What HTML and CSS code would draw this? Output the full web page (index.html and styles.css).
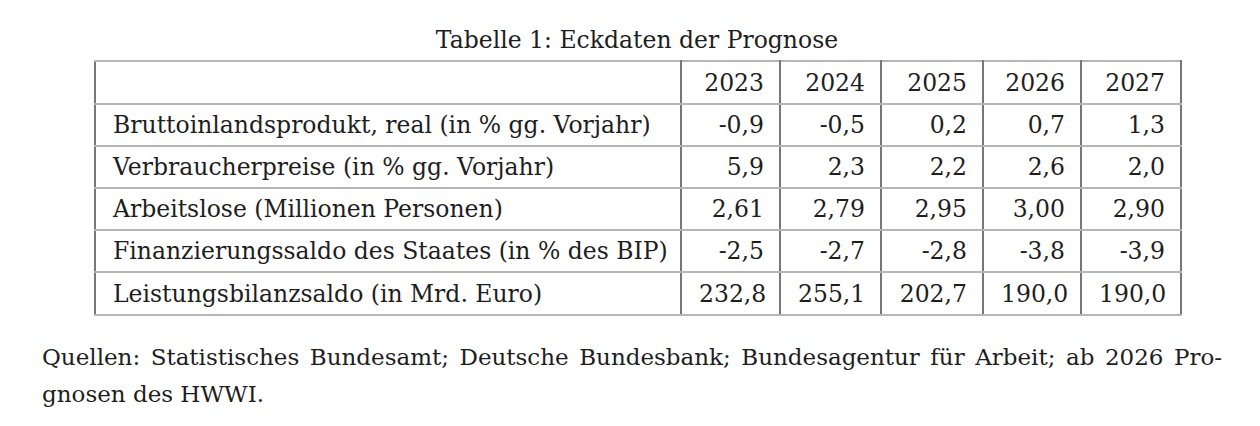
FILE: index.html
```html
<!DOCTYPE html>
<html lang="de">
<head>
<meta charset="utf-8">
<title>Tabelle 1</title>
<link rel="stylesheet" href="styles.css">
</head>
<body>
<div class="page">
  <div class="table-wrap">
    <div class="caption">Tabelle 1: Eckdaten der Prognose</div>
    <table class="data">
      <colgroup>
        <col class="c-label">
        <col class="c-y1">
        <col class="c-y2">
        <col class="c-y3">
        <col class="c-y4">
        <col class="c-y5">
      </colgroup>
      <thead>
        <tr><th></th><th>2023</th><th>2024</th><th>2025</th><th>2026</th><th>2027</th></tr>
      </thead>
      <tbody>
        <tr><td>Bruttoinlandsprodukt, real (in % gg. Vorjahr)</td><td>-0,9</td><td>-0,5</td><td>0,2</td><td>0,7</td><td>1,3</td></tr>
        <tr><td>Verbraucherpreise (in % gg. Vorjahr)</td><td>5,9</td><td>2,3</td><td>2,2</td><td>2,6</td><td>2,0</td></tr>
        <tr><td>Arbeitslose (Millionen Personen)</td><td>2,61</td><td>2,79</td><td>2,95</td><td>3,00</td><td>2,90</td></tr>
        <tr><td>Finanzierungssaldo des Staates (in % des BIP)</td><td>-2,5</td><td>-2,7</td><td>-2,8</td><td>-3,8</td><td>-3,9</td></tr>
        <tr><td>Leistungsbilanzsaldo (in Mrd. Euro)</td><td>232,8</td><td>255,1</td><td>202,7</td><td>190,0</td><td>190,0</td></tr>
      </tbody>
    </table>
  </div>
  <div class="note">
    <div class="note-line justified">Quellen: Statistisches Bundesamt; Deutsche Bundesbank; Bundesagentur für Arbeit; ab 2026 Pro-</div>
    <div class="note-line">gnosen des HWWI.</div>
  </div>
</div>
</body>
</html>
```

FILE: styles.css
```css
html, body {
  margin: 0;
  padding: 0;
  background: #ffffff;
}

body {
  font-family: "DejaVu Serif", "Liberation Serif", serif;
  color: #1e1e1e;
  font-size: 23.5px;
}

.page {
  padding: 22px 0 0 42px;
  width: 1180px;
}

.table-wrap {
  margin-left: 52px;
  width: 1086px;
}

.caption {
  text-align: center;
  line-height: 36px;
  height: 38px;
}

.data {
  border-collapse: collapse;
  table-layout: fixed;
  width: 1086px;
  border: 2px solid #8c8c8c;
}

.c-label { width: 586px; }
.c-y1 { width: 99px; }
.c-y2 { width: 101px; }
.c-y3 { width: 102px; }
.c-y4 { width: 98px; }
.c-y5 { width: 100px; }

.data th,
.data td {
  border-left: 2px solid #777777;
  border-right: 2px solid #777777;
  border-top: 2px solid #b5b5b5;
  border-bottom: 2px solid #b5b5b5;
  height: 40px;
  padding: 0 15px 0 17px;
  font-weight: normal;
  text-align: right;
  white-space: nowrap;
}

.data thead th {
  height: 41px;
}

.data tbody tr:last-child td {
  height: 41px;
}

.data td:first-child {
  text-align: left;
}

.note {
  margin-top: 23px;
  line-height: 37px;
  font-size: 23px;
}

.note-line.justified {
  text-align: justify;
  text-align-last: justify;
}
```
